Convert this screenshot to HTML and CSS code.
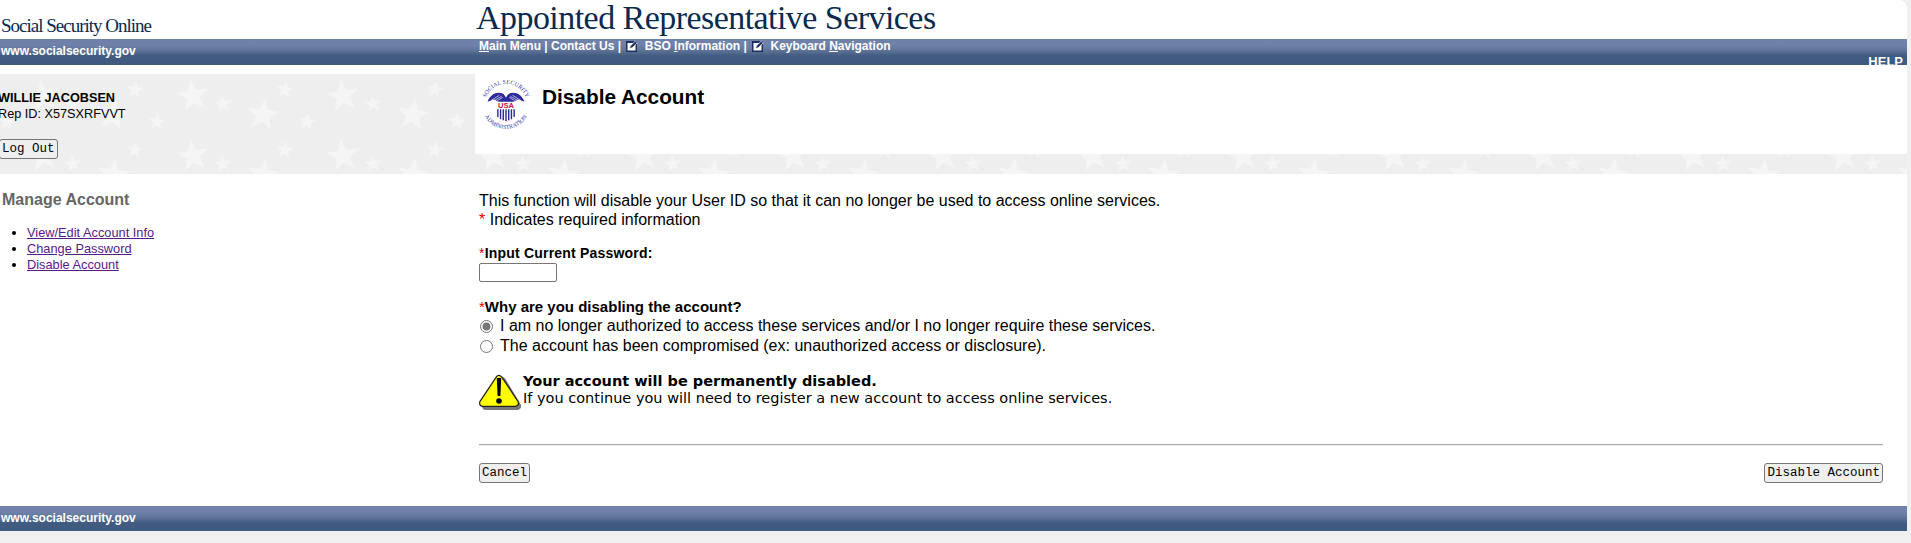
FILE: index.html
```html
<!DOCTYPE html>
<html lang="en">
  <head>
    <meta charset="UTF-8" />
    <title>Disable Account</title>
    <link rel="stylesheet" href="styles.css">
  </head>
  <body>
    <div class="page">
      <header class="masthead">
        <div class="brand">Social Security Online</div>
        <h1 class="app-title">Appointed Representative Services</h1>
      </header>

      <nav class="top-bar">
        <a class="site-link" href="#">www.socialsecurity.gov</a>
        <div class="menu">
          <a href="#"><u>M</u>ain Menu</a> | <a href="#">Contact Us</a> |
          <svg class="ext-icon" viewBox="0 0 12 12"><rect y="1" width="11" height="11" fill="#1c2f63"/><rect x="1.500" y="3" width="8" height="7.500" fill="#fff"/><path d="M3.500 8.500l.8-2.500 5-5 2 1.800-5 5z" fill="#1c2f63" stroke="#fff" stroke-width=".7"/></svg>
          <a class="ext-link" href="#">BSO <u>I</u>nformation</a> |
          <svg class="ext-icon" viewBox="0 0 12 12"><rect y="1" width="11" height="11" fill="#1c2f63"/><rect x="1.500" y="3" width="8" height="7.500" fill="#fff"/><path d="M3.500 8.500l.8-2.500 5-5 2 1.800-5 5z" fill="#1c2f63" stroke="#fff" stroke-width=".7"/></svg>
          <a class="ext-link" href="#">Keyboard <u>N</u>avigation</a>
        </div>
        <a class="help" href="#">HELP</a>
      </nav>

      <section class="banner">
        <div class="user-box">
          <div class="user-name">WILLIE JACOBSEN</div>
          <div>Rep ID: X57SXRFVVT</div>
          <button class="btn logout">Log Out</button>
        </div>
        <div class="title-box">
          <svg class="seal" viewBox="0 0 46 46">
            <defs>
              <path id="seal-ring" d="M23 42.500a19.500 19.500 0 1 1 .1 0"/>
              <path id="seal-ring-low" d="M1 23a22 22 0 0 0 44 0"/>
            </defs>
            <text class="seal-text" text-anchor="middle"><textPath href="#seal-ring" startOffset="50%">SOCIAL SECURITY</textPath></text>
            <text class="seal-text" text-anchor="middle"><textPath href="#seal-ring-low" startOffset="50%">ADMINISTRATION</textPath></text>
            <path d="M6 20c3-7 9-10 15-7l2 3 2-3c6-3 12 0 15 7l-6-2-4 2h-14l-4-2z" fill="#2d2a9c"/>
            <path d="M9 19l8-5M12 19l7-4M15 19l5-3M37 19l-8-5M34 19l-7-4M31 19l-5-3" stroke="#fff" stroke-width=".6"/>
            <text class="seal-usa" x="23" y="25.500" text-anchor="middle">USA</text>
            <path d="M15.500 27v7M18 27v9M20.500 27v10M23 27v11M25.500 27v10M28 27v9M30.500 27v7" stroke="#2d2a9c" stroke-width="1.300"/>
          </svg>
          <h2 class="page-title">Disable Account</h2>
        </div>
      </section>

      <div class="content">
        <aside class="side">
          <h3 class="side-title">Manage Account</h3>
          <ul class="side-links">
            <li><a href="#">View/Edit Account Info</a></li>
            <li><a href="#">Change Password</a></li>
            <li><a href="#">Disable Account</a></li>
          </ul>
        </aside>

        <main class="main">
          <p class="intro">This function will disable your User ID so that it can no longer be used to access online services.<br><span class="req">*</span> Indicates required information</p>

          <label class="pw-label" for="pw"><span class="req">*</span>Input Current Password:</label>
          <input class="pw-input" id="pw" type="password">

          <div class="why"><span class="req">*</span>Why are you disabling the account?</div>
          <label class="choice"><input type="radio" name="why" checked>I am no longer authorized to access these services and/or I no longer require these services.</label>
          <label class="choice"><input type="radio" name="why">The account has been compromised (ex: unauthorized access or disclosure).</label>

          <div class="warning">
            <svg class="warn-icon" viewBox="0 0 42 38">
              <path d="M23 8L38 33H7z" fill="#777" stroke="#777" stroke-width="8" stroke-linejoin="round"/>
              <path d="M20 6L36 30H4z" fill="#222" stroke="#222" stroke-width="8" stroke-linejoin="round"/>
              <path d="M20 6L36 30H4z" fill="#ff0" stroke="#ff0" stroke-width="5.500" stroke-linejoin="round"/>
              <path d="M17.800 5h4.400l-.8 18h-2.800z" fill="#000"/>
              <circle cx="20" cy="28" r="2.800" fill="#000"/>
            </svg>
            <div>
              <strong>Your account will be permanently disabled.</strong><br>
              If you continue you will need to register a new account to access online services.
            </div>
          </div>

          <hr class="rule">

          <div class="actions">
            <button class="btn">Cancel</button>
            <button class="btn">Disable Account</button>
          </div>
        </main>
      </div>

      <footer class="foot-bar">
        <a class="site-link" href="#">www.socialsecurity.gov</a>
      </footer>
    </div>
  </body>
</html>
```

FILE: styles.css
```css
:root {
  --left-col: 475px;
  --ink: #000;
  --panel: #eee;
  --bar-grad: linear-gradient(#7082aa 0, #6f81a8 6px, #62769a 11px, #415b81 17px, #3f5a80 100%);
}
*,
*::before,
*::after {
  box-sizing: border-box;
}
html,
body {
  height: 100%;
}
body {
  margin: 0;
  overflow: hidden;
  background-color: #f0f0f0;
  color: var(--ink);
  font-family: "Liberation Sans", Arial, sans-serif;
  font-size: 12px;
}
.page {
  display: flex;
  flex-direction: column;
  width: calc(100% - 4px);
  height: 531px;
  background-color: #fff;
  border-top-right-radius: 8px;
  overflow: hidden;
}

/* header */
.masthead {
  display: grid;
  grid-template-columns: var(--left-col) 1fr;
  flex: none;
  height: 39px;
  font-family: "Liberation Serif", "Times New Roman", serif;
  color: #0b2a4f;
}
.brand {
  align-self: end;
  padding: 0 0 2px 1px;
  font-size: 19px;
  letter-spacing: -1px;
  white-space: nowrap;
}
.app-title {
  margin: 0;
  padding-left: 1px;
  font-size: 34px;
  font-weight: normal;
  line-height: 36px;
  letter-spacing: -0.55px;
  white-space: nowrap;
}

.top-bar {
  display: grid;
  grid-template-columns: var(--left-col) 1fr auto;
  flex: none;
  height: 26px;
  background: var(--bar-grad);
  overflow: hidden;
}
.top-bar a,
.foot-bar a {
  color: #fff;
  text-decoration: none;
}
.site-link {
  display: block;
  padding: 5px 0 0 1px;
  font-size: 12px;
  font-weight: bold;
  line-height: 14px;
}
.menu {
  padding: 0 0 0 4px;
  color: #fff;
  font-size: 12px;
  font-weight: bold;
  line-height: 15px;
  white-space: nowrap;
}
.ext-icon {
  width: 12px;
  height: 12px;
  margin: 0 2px;
  vertical-align: -2px;
}
.ext-link {
  margin-left: 1px;
}
.help {
  padding: 15px 4px 0 0;
  font-size: 13px;
  font-weight: bold;
  line-height: 15px;
}

/* star banner */
.banner {
  display: grid;
  grid-template-columns: var(--left-col) 1fr;
  flex: none;
  height: 100px;
  margin-top: 9px;
  background-color: var(--panel);
  background-image: url("data:image/svg+xml,%3Csvg xmlns='http://www.w3.org/2000/svg' width='150' height='60'%3E%3Cdefs%3E%3Cpolygon id='s' fill='%23f5f5f5' points='0,-1 .24,-.33 .95,-.31 .38,.12 .59,.81 0,.4 -.59,.81 -.38,.12 -.95,-.31 -.24,-.33'/%3E%3C/defs%3E%3Cuse href='%23s' transform='translate(43 22) rotate(-8) scale(17)'/%3E%3Cuse href='%23s' transform='translate(113 41) rotate(8) scale(17)'/%3E%3Cuse href='%23s' transform='translate(135 16) rotate(8) scale(9)'/%3E%3Cuse href='%23s' transform='translate(73 30) rotate(-6) scale(9)'/%3E%3Cuse href='%23s' transform='translate(7 48) rotate(6) scale(9)'/%3E%3Cuse href='%23s' transform='translate(157 48) rotate(6) scale(9)'/%3E%3C/svg%3E");
}
.user-box {
  margin-left: -2px;
  padding-top: 16px;
  font-size: 12.700px;
  line-height: 16px;
}
.user-name {
  font-weight: bold;
}
.btn {
  height: 20px;
  padding: 0 2px;
  border: 1px solid #767676;
  border-radius: 3px;
  background-color: #efefef;
  color: #000;
  font-family: "Liberation Mono", "Courier New", monospace;
  font-size: 12.500px;
}
.logout {
  display: block;
  margin: 17px 0 0 1px;
}
.title-box {
  display: flex;
  align-items: flex-start;
  gap: 11px;
  height: 80px;
  padding: 5px 0 0 6px;
  background-color: #fff;
}
.seal {
  width: 50px;
  height: 50px;
  margin-top: 1px;
  flex: none;
}
.seal-text {
  fill: #3c3ab0;
  font-family: "Liberation Serif", serif;
  font-size: 5.500px;
}
.seal-usa {
  fill: #d2123f;
  font-family: "Liberation Sans", sans-serif;
  font-size: 7px;
  font-weight: bold;
}
.page-title {
  margin: 6px 0 0;
  font-size: 20.800px;
  line-height: 24px;
}

/* body columns */
.content {
  display: grid;
  grid-template-columns: var(--left-col) 1fr;
  flex: 1;
}
.side {
  padding: 17px 0 0 2px;
}
.side-title {
  margin: 0;
  color: #666;
  font-size: 16px;
  line-height: 18px;
}
.side-links {
  margin: 16px 0 0;
  padding-left: 25px;
  font-size: 12.800px;
  line-height: 16px;
}
.side-links a {
  color: #551a8b;
}
.main {
  padding: 17px 24px 0 4px;
  font-size: 16px;
}
.intro {
  margin: 0;
  line-height: 19px;
}
.req {
  color: #d00;
  font-weight: normal;
}
.pw-label {
  display: block;
  margin-top: 16px;
  font-size: 14px;
  font-weight: bold;
  line-height: 17px;
  letter-spacing: .2px;
}
.pw-input {
  display: block;
  width: 78px;
  height: 19px;
  margin: 1px 0 0;
  border: 1px solid #767676;
  border-radius: 2px;
  background: #fff;
}
.why {
  margin-top: 16px;
  padding-bottom: 1px;
  font-size: 15px;
  font-weight: bold;
  line-height: 17px;
}
.choice {
  display: flex;
  align-items: center;
  height: 20px;
}
.choice input {
  width: 13px;
  height: 13px;
  margin: 0 7px 0 1px;
  accent-color: #767676;
}
.warning {
  display: flex;
  align-items: flex-start;
  gap: 2px;
  margin-top: 17px;
  font-family: "DejaVu Sans", Verdana, sans-serif;
  font-size: 14.500px;
  line-height: 17px;
}
.warn-icon {
  width: 42px;
  height: 38px;
  flex: none;
}
.rule {
  height: 2px;
  margin: 33px 0 0;
  border: 0;
  border-top: 1px solid #a9a9a9;
  border-bottom: 1px solid #eee;
}
.actions {
  display: flex;
  justify-content: space-between;
  margin-top: 17px;
}

/* footer */
.foot-bar {
  flex: none;
  height: 25px;
  background: var(--bar-grad);
}
```
